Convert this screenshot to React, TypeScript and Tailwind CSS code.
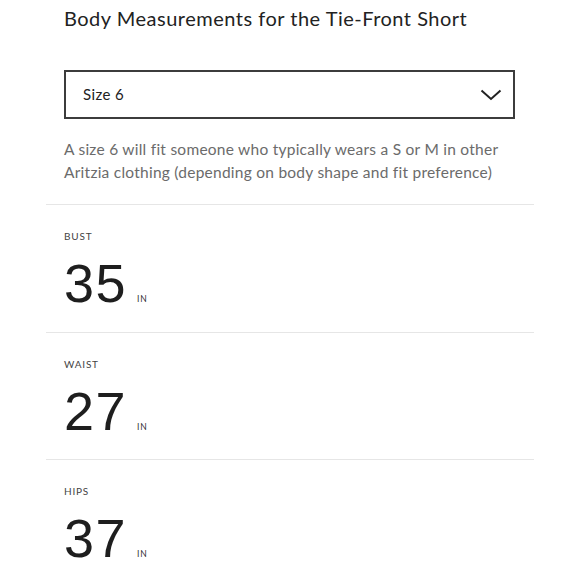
const sans = "font-['Lato','Noto_Sans',sans-serif]";

const measurements = [
  { label: "BUST", value: "35" },
  { label: "WAIST", value: "27" },
  { label: "HIPS", value: "37" },
];

function Measurement({ label, value }: { label: string; value: string }) {
  return (
    <div className="h-[127.5px] border-t border-[#e6e6e6] pl-[18px] pt-[25px]">
      <div className={`${sans} text-[10px] leading-[12px] tracking-[0.08em] text-[#444]`}>
        {label}
      </div>
      <div className="mt-[15px] flex items-baseline">
        <span className="font-['Liberation_Sans',Arial,sans-serif] text-[54px] leading-[53px] tracking-[1.5px] text-[#1e1e1e]">
          {value}
        </span>
        <span className={`${sans} ml-[10px] text-[8.5px] tracking-[0.08em] text-[#333]`}>IN</span>
      </div>
    </div>
  );
}

export default function App() {
  return (
    <div className="h-[580px] w-[580px] overflow-hidden bg-white">
      <div className="px-[64px] pt-[4px]">
        <h2 className={`${sans} text-[20px] leading-[28px] tracking-[0.5px] text-[#222]`}>
          Body Measurements for the Tie-Front Short
        </h2>

        <div className="mt-[38px] flex h-[49px] w-[451px] items-center justify-between border-2 border-[#3c3c3c] pl-[17px] pr-[11px]">
          <span className={`${sans} text-[15px] tracking-[0.4px] text-[#222]`}>Size 6</span>
          <svg width="22" height="12" viewBox="0 0 22 12" fill="none">
            <path d="M1.5 1.5 L11 10 L20.5 1.5" stroke="#222" strokeWidth="2" />
          </svg>
        </div>

        <p className={`${sans} mt-[19px] whitespace-nowrap text-[15.5px] leading-[23px] tracking-[0.25px] text-[#6b6b6b]`}>
          A size 6 will fit someone who typically wears a S or M in other
          <br />
          Aritzia clothing (depending on body shape and fit preference)
        </p>
      </div>

      <div className="mx-[46px] mt-[20px]">
        {measurements.map((m) => (
          <Measurement key={m.label} label={m.label} value={m.value} />
        ))}
      </div>
    </div>
  );
}
